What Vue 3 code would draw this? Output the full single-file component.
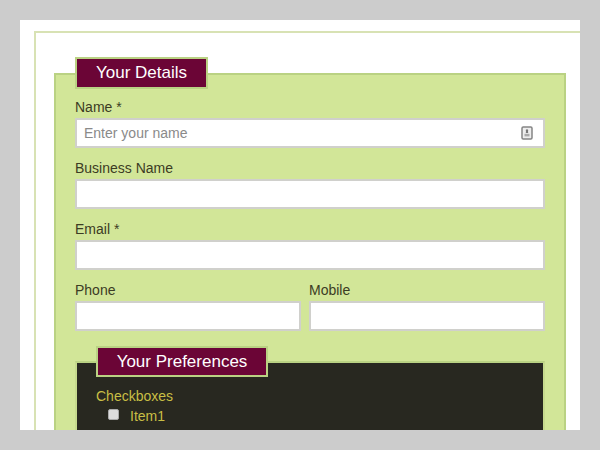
<script setup>
const rows = [
  { id: 'business', label: 'Business Name' },
  { id: 'email', label: 'Email *' }
]
</script>

<template>
  <div class="stage">
    <main class="page">
      <section class="outer">
        <form class="details">
          <h2 class="legend">Your Details</h2>
          <div class="field first">
            <label for="name">Name *</label>
            <div class="input-wrap">
              <input id="name" type="text" placeholder="Enter your name" />
              <svg class="contact" width="12" height="14" viewBox="0 0 12 14" aria-hidden="true">
                <rect x="1" y="1" width="10" height="12" rx="1.2" fill="#eee" stroke="#858585" stroke-width="1.5" />
                <path d="M6 3.2a1.2 1.2 0 0 1 1 1.9L7.2 7H4.8L5 5.1a1.2 1.2 0 0 1 1-1.9z" fill="#777" />
                <rect x="3.5" y="7.8" width="5" height="2.6" fill="#aaa" />
              </svg>
            </div>
          </div>
          <div v-for="row in rows" :key="row.id" class="field">
            <label :for="row.id">{{ row.label }}</label>
            <input :id="row.id" type="text" />
          </div>
          <div class="pair">
            <div class="field">
              <label for="phone">Phone</label>
              <input id="phone" type="tel" />
            </div>
            <div class="field">
              <label for="mobile">Mobile</label>
              <input id="mobile" type="tel" />
            </div>
          </div>
          <section class="prefs">
            <h2 class="legend">Your Preferences</h2>
            <div class="group-title">Checkboxes</div>
            <label class="check"><input type="checkbox" /><span>Item1</span></label>
          </section>
        </form>
      </section>
    </main>
  </div>
</template>

<style>
html, body { margin: 0; background: #ccc; }
</style>

<style scoped>
.stage {
  box-sizing: border-box;
  width: 600px;
  height: 450px;
  padding: 20px;
  overflow: hidden;
  background: #ccc;
  font-family: "Liberation Sans", Arial, sans-serif;
}
.page {
  box-sizing: border-box;
  height: 410px;
  padding: 11px 0 0 14px;
  overflow: hidden;
  background: #fff;
}
.outer {
  width: 580px;
  height: 500px;
  box-sizing: border-box;
  padding: 40px 0 0 18px;
  border: 2px solid #d8e2b4;
}
.details {
  box-sizing: border-box;
  width: 512px;
  height: 500px;
  padding: 0 19px;
  background: #d2e698;
  border: 2px solid #bad283;
}
.legend {
  box-sizing: border-box;
  display: flex;
  align-items: center;
  justify-content: center;
  margin: -18px 0 0;
  padding-bottom: 2px;
  border: 2px solid #bad283;
  background: #6b0536;
  color: #fff;
  font-size: 17px;
  font-weight: 400;
  line-height: 1;
}
.details > .legend {
  width: 133px;
  height: 32px;
}
.field {
  display: flex;
  flex-direction: column;
  margin-top: 10px;
}
.field.first { margin-top: 8px; }
label {
  height: 21px;
  color: #3c3c24;
  font-size: 14px;
  line-height: 20px;
}
input[type="text"], input[type="tel"] {
  box-sizing: border-box;
  width: 100%;
  height: 30px;
  padding: 0 7px;
  border: 2px solid #d0d0cc;
  background: #fff;
  color: #333;
  font: 14px "Liberation Sans", Arial, sans-serif;
  outline: 0;
}
input::placeholder { color: #8a8a8a; opacity: 1; }
.input-wrap { position: relative; }
.contact {
  position: absolute;
  top: 8px;
  right: 12px;
}
.pair {
  display: grid;
  grid-template-columns: 226px 236px;
  column-gap: 8px;
}
.prefs {
  box-sizing: border-box;
  height: 200px;
  margin-top: 30px;
  padding: 0 19px;
  border: 2px solid #c6da8e;
  border-top-color: #bad283;
  background: #282820;
}
.prefs > .legend {
  width: 172px;
  height: 31px;
  margin-top: -17px;
  padding-bottom: 0;
}
.group-title {
  margin-top: 9px;
  color: #c8bf45;
  font-size: 14px;
  line-height: 20px;
}
.check {
  display: flex;
  align-items: center;
  height: 20px;
  padding-left: 12px;
  color: #c8bf45;
}
.check input {
  appearance: none;
  box-sizing: border-box;
  width: 11px;
  height: 11px;
  margin: 0 11px 3px 0;
  border: 1px solid #aaa;
  border-radius: 2px;
  background: #ddd;
}
</style>
